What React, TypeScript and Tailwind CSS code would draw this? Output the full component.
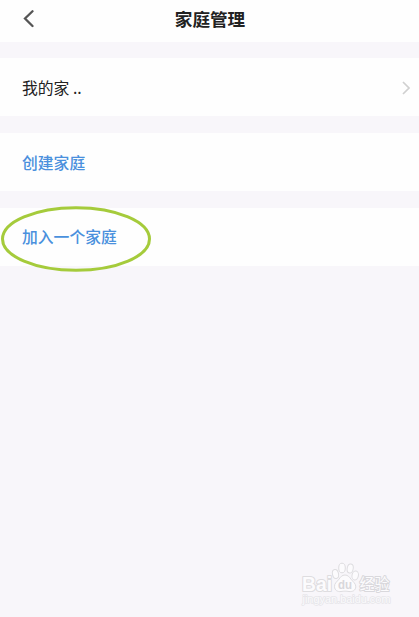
import type { ReactNode } from "react";

function Row({ children, className = "" }: { children: ReactNode; className?: string }) {
  return (
    <div className={`flex h-[58px] items-center bg-[#fefefe] pl-[22px] pr-[9px] text-[15.8px] ${className}`}>
      {children}
    </div>
  );
}

function Watermark() {
  return (
    <svg
      className="absolute left-[300px] top-[560px] h-[50px] w-[100px]"
      viewBox="0 0 100 50"
      fill="#fcfbfd"
      stroke="#dedde0"
      strokeWidth="1"
      strokeLinejoin="round"
    >
      <g fontWeight="700" paintOrder="stroke">
        <text x="2" y="31" fontFamily="'Liberation Sans', sans-serif" fontSize="20.5" strokeWidth="2.2" textLength="30" lengthAdjust="spacingAndGlyphs">
          Bai
        </text>
        <text x="59.500" y="30" fontFamily="'Noto Sans CJK SC', sans-serif" fontSize="15.5" fontWeight="400" stroke="#d9d8dc" strokeWidth="2" textLength="30" lengthAdjust="spacingAndGlyphs">
          经验
        </text>
        <text x="2.500" y="43" fontFamily="'Liberation Sans', sans-serif" fontSize="10" fontWeight="400" fill="#fafafc" stroke="#e6e5e9" strokeWidth="1.4" textLength="88" lengthAdjust="spacingAndGlyphs">
          jingyan.baidu.com
        </text>
      </g>
      <ellipse cx="35.5" cy="14" rx="3" ry="4.6" transform="rotate(-12 35.5 14)" />
      <ellipse cx="42" cy="8" rx="3.3" ry="4.8" />
      <ellipse cx="50.2" cy="8.5" rx="3" ry="4.6" transform="rotate(10 50.2 8.5)" />
      <ellipse cx="55.2" cy="15.5" rx="3.2" ry="4.5" transform="rotate(12 55.2 15.5)" />
      <path d="M45 15c-3 0-4.500 2-6 4.200-2 2.500-4.800 4.200-4.500 7.500.2 3.500 3 5.300 6.500 4.800 3-.5 5-.5 8 0 3.500.5 6.500-1 6.800-4.600.2-3.200-2.800-5.200-4.800-7.700-1.500-2-3-4.200-6-4.200z" />
      <text x="38" y="28.500" fontFamily="'Liberation Sans', sans-serif" fontWeight="700" fontSize="12" fill="#d8d7db" stroke="none" textLength="14" lengthAdjust="spacingAndGlyphs">
        du
      </text>
    </svg>
  );
}

export default function App() {
  return (
    <main className="relative flex h-[617px] w-[419px] flex-col overflow-hidden bg-[#f8f6fa] font-['Noto_Sans_CJK_SC',sans-serif] text-[#222]">
      <header className="grid h-[42px] grid-cols-[1fr_auto_1fr] items-center bg-[#fefefe] pb-1">
        <svg className="ml-[22px] h-5 w-3" viewBox="0 0 12 20" fill="none" stroke="#555" strokeWidth="2.3" strokeLinecap="round">
          <path d="M10.500 2.200 3 9.500l7.500 7.500" />
        </svg>
        <h1 className="pl-px text-[17.6px] font-bold leading-[26px]">家庭管理</h1>
      </header>
      <div className="mt-4 flex flex-col gap-[17px]">
        <Row className="justify-between pt-px">
          <span className="pt-px">我的家 ..</span>
          <svg className="h-3.5 w-2" viewBox="0 0 8 14" fill="none" stroke="#d0d0d0" strokeWidth="1.7">
            <path d="m1 1 6 6-6 6" />
          </svg>
        </Row>
        <Row className="pt-px font-medium text-[#4a90dd]">创建家庭</Row>
        <Row className="font-medium text-[#4a90dd]">加入一个家庭</Row>
      </div>
      <svg className="absolute left-0 top-[204px] h-[70px] w-[153px]" viewBox="0 0 153 70" fill="none" stroke="#a5cb3b" strokeWidth="3">
        <ellipse cx="76" cy="35" rx="73.500" ry="31.300" />
      </svg>
      <Watermark />
    </main>
  );
}
